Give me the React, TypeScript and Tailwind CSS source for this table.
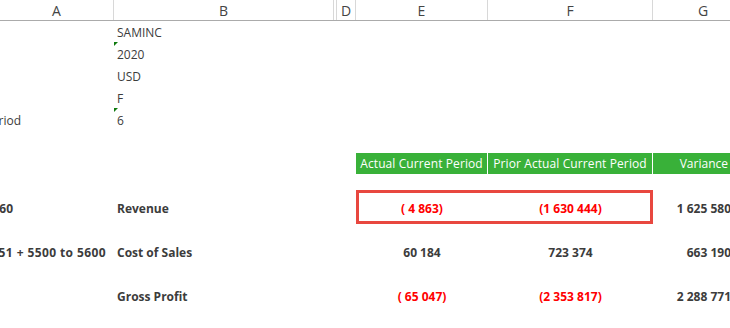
import React from "react";

const W = {
  A: "w-[114px]",
  B: "w-[220px]",
  C: "w-[3px]",
  D: "w-[19px]",
  E: "w-[132px]",
  F: "w-[165px]",
  G: "w-[100px]",
};

function HeaderCell({ w, label, extra = "" }: { w: string; label: string; extra?: string }) {
  return (
    <div
      className={`${w} ${extra} shrink-0 h-full border-r border-[#d8d8d8] flex items-center justify-center text-[14px] text-[#444444]`}
    >
      {label}
    </div>
  );
}

function Tri() {
  return (
    <div className="absolute left-0 top-0 w-0 h-0 border-t-[4px] border-t-[#0e7a0e] border-r-[4px] border-r-transparent" />
  );
}

function Row({
  h,
  pt = "pt-[4px]",
  a,
  b,
  e,
  f,
  g,
  tri = false,
  bold = false,
  children,
}: {
  h: string;
  pt?: string;
  a?: React.ReactNode;
  b?: React.ReactNode;
  e?: React.ReactNode;
  f?: React.ReactNode;
  g?: React.ReactNode;
  tri?: boolean;
  bold?: boolean;
  children?: React.ReactNode;
}) {
  return (
    <div className={`${h} flex shrink-0 relative ${bold ? "font-bold" : ""}`}>
      <div className={`${W.A} ${pt} shrink-0 h-full flex items-center`}>{a}</div>
      <div className={`${W.B} shrink-0 h-full relative flex items-center pl-[3px] ${pt}`}>
        {tri && <Tri />}
        {b}
      </div>
      <div className={`${W.C} shrink-0`} />
      <div className={`${W.D} shrink-0`} />
      <div className={`${W.E} ${pt} shrink-0 h-full flex items-center justify-center`}>{e}</div>
      <div className={`${W.F} ${pt} shrink-0 h-full flex items-center justify-center`}>{f}</div>
      <div className={`${W.G} ${pt} shrink-0 h-full flex items-center justify-end pr-[22px] whitespace-nowrap`}>{g}</div>
      {children}
    </div>
  );
}

function AText({ w, text, extra = "" }: { w: string; text: string; extra?: string }) {
  return <div className={`${w} ${extra} flex justify-end whitespace-nowrap`}>{text}</div>;
}

const Neg = ({ v }: { v: string }) => <span className="text-[#ff0000]">{v}</span>;

export default function App() {
  return (
    <div
      className="w-[730px] h-[328px] overflow-hidden bg-white relative text-[12px] text-[#3c3c3c] flex flex-col"
      style={{ fontFamily: '"Open Sans", "Noto Sans", sans-serif' }}
    >
      {/* column headers */}
      <div className="h-[21px] shrink-0 flex border-b border-[#ababab] bg-white">
        <HeaderCell w={W.A} label="A" />
        <HeaderCell w={W.B} label="B" />
        <HeaderCell w={W.C} label="" />
        <HeaderCell w={W.D} label="D" />
        <HeaderCell w={W.E} label="E" />
        <HeaderCell w={W.F} label="F" />
        <div className={`${W.G} shrink-0 h-full flex items-center justify-center text-[14px] text-[#444444]`}>G</div>
      </div>

      <Row h="h-[21px]" pt="pt-[2px]" b="SAMINC" />
      <Row h="h-[22px]" b="2020" tri />
      <Row h="h-[22px]" b="USD" />
      <Row h="h-[22px]" b="F" />
      <Row h="h-[22px]" b="6" tri a={<AText w="w-[21px]" text="Reporting Period" />} />
      <Row h="h-[22px]" />

      {/* green header row */}
      <div className="h-[22px] shrink-0 flex items-end">
        <div className={`${W.A} shrink-0`} />
        <div className={`${W.B} shrink-0`} />
        <div className={`${W.C} shrink-0`} />
        <div className={`${W.D} shrink-0`} />
        <div className={`${W.E} shrink-0 h-[21px] bg-[#39b139] border-r border-white text-white flex items-center justify-center whitespace-nowrap tracking-[0.1px]`}>
          Actual Current Period
        </div>
        <div className={`${W.F} shrink-0 h-[21px] bg-[#39b139] border-r border-white text-white flex items-center justify-center whitespace-nowrap tracking-[0.1px]`}>
          Prior Actual Current Period
        </div>
        <div className={`${W.G} shrink-0 h-[21px] bg-[#39b139] text-white flex items-center justify-end pr-[25px] whitespace-nowrap`}>
          Variance
        </div>
      </div>

      <div className="h-[12px] shrink-0" />

      <Row
        h="h-[44px]"
        pt="pt-[2px]"
        bold
        a={<AText w="w-[13px]" text="4000 to 4060" />}
        b="Revenue"
        e={<Neg v="( 4 863)" />}
        f={<Neg v="(1 630 444)" />}
        g="1 625 580"
      >
        <div className="absolute left-[356px] top-[4px] w-[297px] h-[34px] border-[3px] border-[#e8473f] pointer-events-none" />
      </Row>
      <Row
        h="h-[44px]"
        pt="pt-[2px]"
        bold
        a={<AText w="w-[106px]" extra="tracking-[0.4px]" text="5000 to 5051 + 5500 to 5600" />}
        b="Cost of Sales"
        e="60 184"
        f="723 374"
        g="663 190"
      />
      <Row
        h="h-[44px]"
        pt="pt-[2px]"
        bold
        b="Gross Profit"
        e={<Neg v="( 65 047)" />}
        f={<Neg v="(2 353 817)" />}
        g="2 288 771"
      />
    </div>
  );
}
